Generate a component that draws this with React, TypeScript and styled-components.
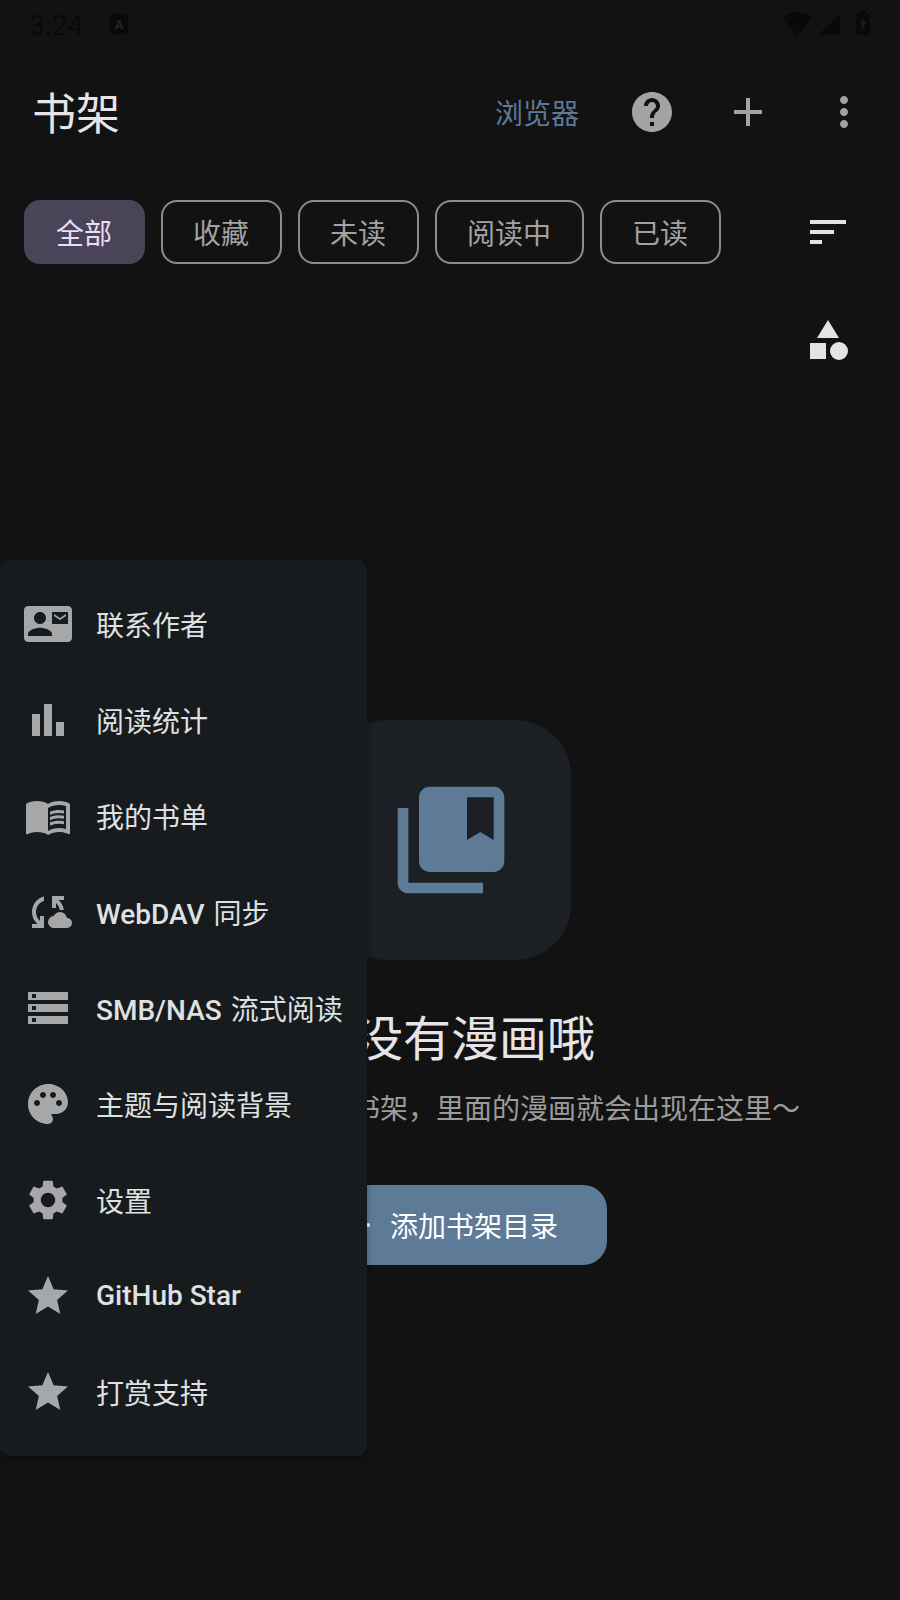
import React from "react";
import styled, { createGlobalStyle } from "styled-components";
import {
  MdAdd, MdBarChart, MdCategory, MdCloudSync, MdCollectionsBookmark, MdContactMail, MdHelp,
  MdMenuBook, MdMoreVert, MdPalette, MdSettings, MdSort, MdStar, MdStorage,
} from "react-icons/md";

const Global = createGlobalStyle`
  html, body { margin: 0; padding: 0; background: #121212; }
  body { font-family: Roboto, "Noto Sans CJK SC", sans-serif; }
`;

const Page = styled.div`
  position: relative; width: 900px; height: 1600px; overflow: hidden;
  background: #121212; display: flex; flex-direction: column;
`;
const StatusBar = styled.div`
  height: 48px; padding: 0 30px 0 29px; display: flex; align-items: center; gap: 27px; color: #090909;
`;
const Clock = styled.span`font-size: 28px; line-height: 28px; padding-top: 3px;`;
const InputBadge = styled.span`
  width: 18px; height: 20px; background: #090909; border-radius: 2px; color: #242424;
  font-size: 13px; font-weight: 700; display: flex; align-items: center; justify-content: center;
`;
const StatusRight = styled.div`
  margin-left: auto; align-self: flex-end; margin-bottom: 13px; display: flex; align-items: flex-end; gap: 6px;
`;
const BatterySlot = styled.span`display: flex; margin-left: 10px;`;
const TopBar = styled.div`
  height: 128px; padding: 0 8px 0 32px; display: flex; align-items: center;
`;
const Title = styled.h1`
  margin: 0; padding-top: 6px; flex: 1; font-size: 44px; font-weight: 400; color: #e6e4e6; line-height: 1;
`;
const TextAction = styled.span`
  font-size: 28px; color: #5d7a96; padding-right: 25px;
`;
const IconAction = styled.span`
  width: 96px; height: 96px; display: flex; align-items: center; justify-content: center;
  color: #a3a3a3;
`;
const FilterRow = styled.div`
  height: 64px; margin-top: 24px; padding: 0 24px; display: flex; align-items: center; gap: 16px;
`;
const Chip = styled.span<{ $active?: boolean }>`
  height: 64px; box-sizing: border-box;
  padding: ${(p) => (p.$active ? "0 33px 0 32px" : "0 31px 0 30px")};
  display: flex; align-items: center; border-radius: 16px; font-size: 28px;
  color: ${(p) => (p.$active ? "#e8def8" : "#a2a2a2")};
  background: ${(p) => (p.$active ? "#4a4458" : "transparent")};
  border: ${(p) => (p.$active ? "none" : "2px solid #8e8c92")};
`;
const EndIcon = styled.span`
  margin-left: auto; width: 48px; height: 48px; display: flex; color: #e6e1e5; margin-right: 24px;
`;
const ToolRow = styled.div`
  display: flex; justify-content: flex-end; padding: 52px 24px 0 0;
`;
const Empty = styled.div`
  margin-top: 356px; margin-left: 2px; display: flex; flex-direction: column; align-items: center;
`;
const Tile = styled.div`
  width: 240px; height: 240px; border-radius: 56px; background: #1c2024;
  display: flex; align-items: center; justify-content: center; color: #5d7a96;
`;
const EmptyTitle = styled.h2`
  margin: 44px 0 0; font-size: 48px; line-height: 72px; font-weight: 400; color: #e6e4e6;
`;
const EmptyText = styled.p`
  margin: 14px 0 0; padding-right: 2px; font-size: 28px; line-height: 40px; color: #9b9b9b; white-space: nowrap;
`;
const AddButton = styled.div`
  margin-top: 55px; width: 312px; height: 80px; box-sizing: border-box; padding-left: 43px;
  border-radius: 24px; background: #5d7a96;
  display: flex; align-items: center; gap: 12px;
  font-size: 28px; color: #fff;
`;
const Menu = styled.nav`
  position: absolute; left: 0; top: 560px; width: 367px; padding: 16px 0; border-radius: 10px;
  background: #181b1e; box-shadow: 0 2px 6px rgba(0,0,0,.3);
`;
const MenuRow = styled.div`
  height: 96px; padding: 0 24px; display: flex; align-items: center; gap: 24px;
  color: #a6a7a9; white-space: nowrap;
`;
const MenuLabel = styled.span<{ $latinOnly?: boolean }>`
  font-size: 28px; color: #dfe0e1; line-height: 40px;
  padding-top: ${(p) => (p.$latinOnly ? 0 : 6)}px;
`;
const Latin = styled.span`font-weight: 500;`;
const CjkTail = styled.span`margin-left: 2px;`;

type Row = { icon: React.ReactNode; label: React.ReactNode; latinOnly?: boolean };
const rows: Row[] = [
  { icon: <MdContactMail size={48} />, label: "联系作者" },
  { icon: <MdBarChart size={48} />, label: "阅读统计" },
  { icon: <MdMenuBook size={48} />, label: "我的书单" },
  { icon: <MdCloudSync size={48} />, label: <><Latin>WebDAV</Latin> <CjkTail>同步</CjkTail></> },
  { icon: <MdStorage size={48} />, label: <><Latin>SMB/NAS</Latin> <CjkTail>流式阅读</CjkTail></> },
  { icon: <MdPalette size={48} />, label: "主题与阅读背景" },
  { icon: <MdSettings size={48} />, label: "设置" },
  { icon: <MdStar size={48} />, label: <Latin>GitHub Star</Latin>, latinOnly: true },
  { icon: <MdStar size={48} />, label: "打赏支持" },
];

export default function App() {
  return (
    <Page>
      <Global />
      <StatusBar>
        <Clock>3:24</Clock>
        <InputBadge>A</InputBadge>
        <StatusRight>
          <svg width="30" height="23" viewBox="0 0 30 23"><path fill="currentColor" d="M15 23 0 6Q6 0 15 0t15 6z" /></svg>
          <svg width="22" height="21" viewBox="0 0 22 21"><path fill="currentColor" d="M22 0v21H0z" /></svg>
          <BatterySlot>
            <svg width="14" height="25" viewBox="0 0 14 25">
              <path fill="currentColor" d="M4 0h6v4h4v21H0V4h4z" />
              <path fill="#1e1e1e" d="M8 7 4 15h2.5L5.5 21 10 12H7.5z" />
            </svg>
          </BatterySlot>
        </StatusRight>
      </StatusBar>
      <TopBar>
        <Title>书架</Title>
        <TextAction>浏览器</TextAction>
        <IconAction><MdHelp size={48} /></IconAction>
        <IconAction><MdAdd size={48} /></IconAction>
        <IconAction><MdMoreVert size={48} /></IconAction>
      </TopBar>
      <FilterRow>
        <Chip $active>全部</Chip>
        <Chip>收藏</Chip>
        <Chip>未读</Chip>
        <Chip>阅读中</Chip>
        <Chip>已读</Chip>
        <EndIcon><MdSort size={48} /></EndIcon>
      </FilterRow>
      <ToolRow>
        <EndIcon><MdCategory size={48} /></EndIcon>
      </ToolRow>
      <Empty>
        <Tile><MdCollectionsBookmark size={128} /></Tile>
        <EmptyTitle>还没有漫画哦</EmptyTitle>
        <EmptyText>先添加一个目录作为书架，里面的漫画就会出现在这里～</EmptyText>
        <AddButton><MdAdd size={40} />添加书架目录</AddButton>
      </Empty>
      <Menu>
        {rows.map((r, i) => (
          <MenuRow key={i}>{r.icon}<MenuLabel $latinOnly={r.latinOnly}>{r.label}</MenuLabel></MenuRow>
        ))}
      </Menu>
    </Page>
  );
}
